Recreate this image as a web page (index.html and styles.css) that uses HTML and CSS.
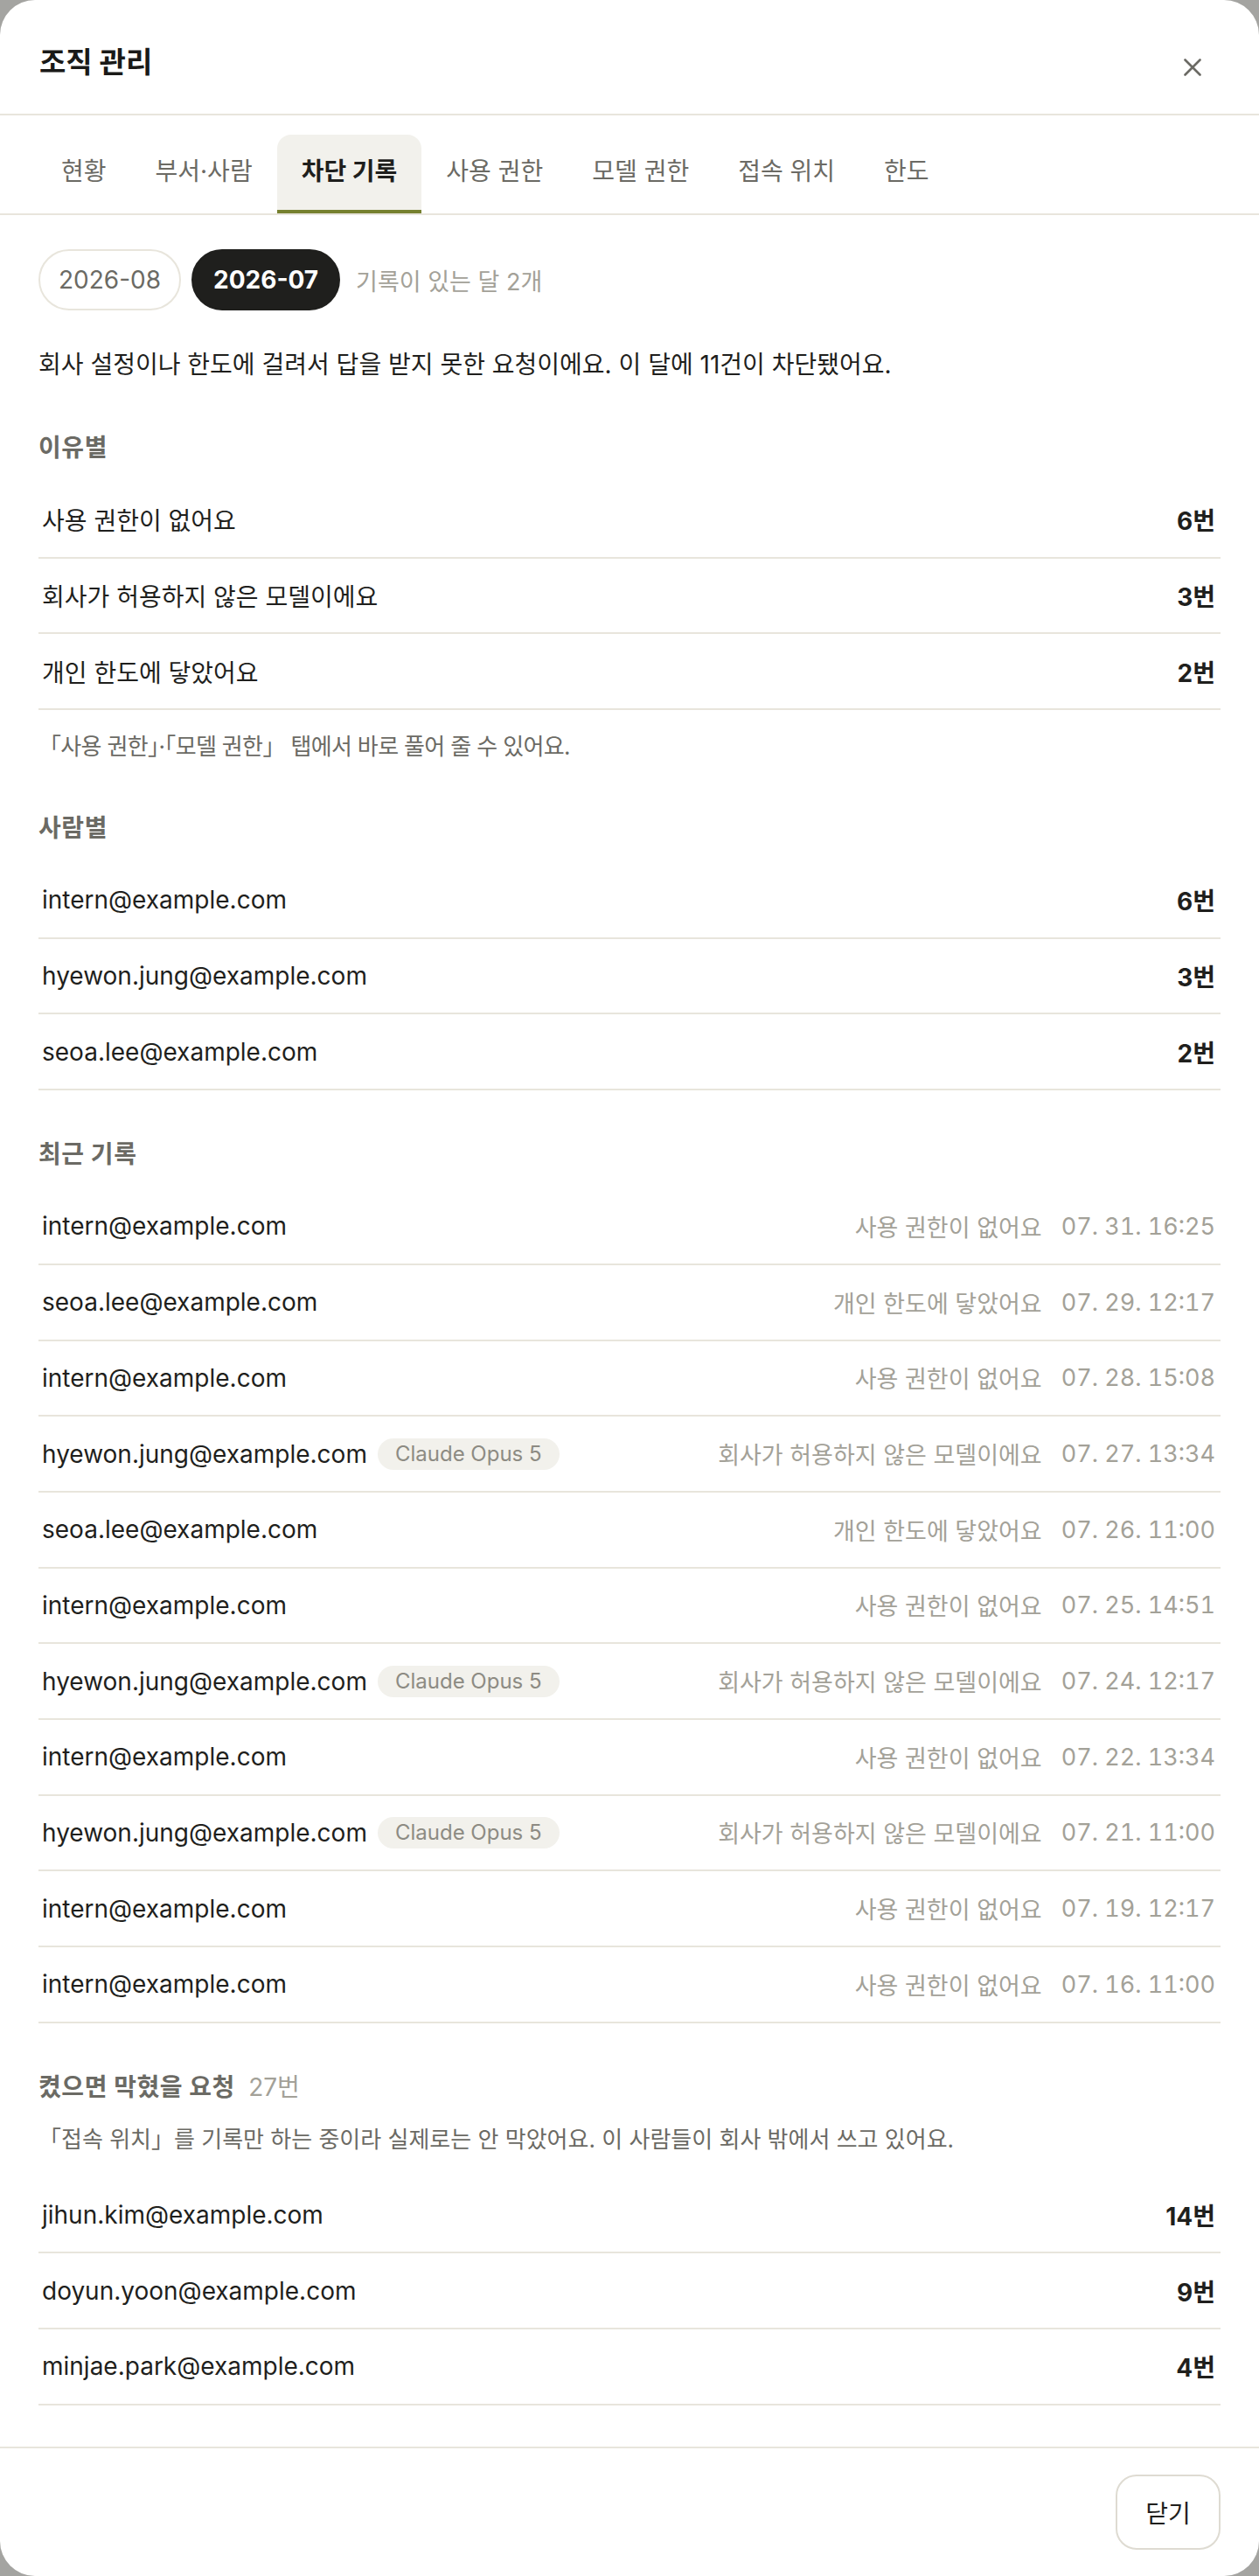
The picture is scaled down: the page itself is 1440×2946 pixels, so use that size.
FILE: index.html
```html
<!DOCTYPE html>
<html lang="ko">
<head>
<meta charset="utf-8">
<title>조직 관리</title>
<link rel="stylesheet" href="styles.css">
</head>
<body>
<div class="modal">
  <header class="modal-header">
    <h1 class="title">조직 관리</h1>
    <button class="close" aria-label="닫기">
      <svg width="20" height="20" viewBox="0 0 20 20" fill="none" stroke="currentColor" stroke-width="2.6" stroke-linecap="round"><path d="M1.5 1.5 L18.5 18.5 M18.5 1.5 L1.5 18.5"/></svg>
    </button>
  </header>
  <nav class="tabs">
    <button class="tab">현황</button>
    <button class="tab">부서·사람</button>
    <button class="tab active">차단 기록</button>
    <button class="tab">사용 권한</button>
    <button class="tab">모델 권한</button>
    <button class="tab">접속 위치</button>
    <button class="tab">한도</button>
  </nav>
  <main class="content">
    <div class="months">
      <button class="month">2026-08</button>
      <button class="month active">2026-07</button>
      <span class="months-note">기록이 있는 달 2개</span>
    </div>
    <p class="lead">회사 설정이나 한도에 걸려서 답을 받지 못한 요청이에요. 이 달에 11건이 차단됐어요.</p>

    <section class="section">
      <h2 class="section-title">이유별</h2>
      <ul class="list">
        <li class="row"><span class="label">사용 권한이 없어요</span><span class="count">6번</span></li>
        <li class="row"><span class="label">회사가 허용하지 않은 모델이에요</span><span class="count">3번</span></li>
        <li class="row"><span class="label">개인 한도에 닿았어요</span><span class="count">2번</span></li>
      </ul>
      <p class="hint">「사용 권한」·「모델 권한」 탭에서 바로 풀어 줄 수 있어요.</p>
    </section>

    <section class="section">
      <h2 class="section-title">사람별</h2>
      <ul class="list">
        <li class="row"><span class="label">intern@example.com</span><span class="count">6번</span></li>
        <li class="row"><span class="label">hyewon.jung@example.com</span><span class="count">3번</span></li>
        <li class="row"><span class="label">seoa.lee@example.com</span><span class="count">2번</span></li>
      </ul>
    </section>

    <section class="section">
      <h2 class="section-title">최근 기록</h2>
      <ul class="list">
        <li class="row"><span class="main"><span class="label">intern@example.com</span></span><span class="meta"><span class="reason">사용 권한이 없어요</span><span class="time">07. 31. 16:25</span></span></li>
        <li class="row"><span class="main"><span class="label">seoa.lee@example.com</span></span><span class="meta"><span class="reason">개인 한도에 닿았어요</span><span class="time">07. 29. 12:17</span></span></li>
        <li class="row"><span class="main"><span class="label">intern@example.com</span></span><span class="meta"><span class="reason">사용 권한이 없어요</span><span class="time">07. 28. 15:08</span></span></li>
        <li class="row"><span class="main"><span class="label">hyewon.jung@example.com</span><span class="chip">Claude Opus 5</span></span><span class="meta"><span class="reason">회사가 허용하지 않은 모델이에요</span><span class="time">07. 27. 13:34</span></span></li>
        <li class="row"><span class="main"><span class="label">seoa.lee@example.com</span></span><span class="meta"><span class="reason">개인 한도에 닿았어요</span><span class="time">07. 26. 11:00</span></span></li>
        <li class="row"><span class="main"><span class="label">intern@example.com</span></span><span class="meta"><span class="reason">사용 권한이 없어요</span><span class="time">07. 25. 14:51</span></span></li>
        <li class="row"><span class="main"><span class="label">hyewon.jung@example.com</span><span class="chip">Claude Opus 5</span></span><span class="meta"><span class="reason">회사가 허용하지 않은 모델이에요</span><span class="time">07. 24. 12:17</span></span></li>
        <li class="row"><span class="main"><span class="label">intern@example.com</span></span><span class="meta"><span class="reason">사용 권한이 없어요</span><span class="time">07. 22. 13:34</span></span></li>
        <li class="row"><span class="main"><span class="label">hyewon.jung@example.com</span><span class="chip">Claude Opus 5</span></span><span class="meta"><span class="reason">회사가 허용하지 않은 모델이에요</span><span class="time">07. 21. 11:00</span></span></li>
        <li class="row"><span class="main"><span class="label">intern@example.com</span></span><span class="meta"><span class="reason">사용 권한이 없어요</span><span class="time">07. 19. 12:17</span></span></li>
        <li class="row"><span class="main"><span class="label">intern@example.com</span></span><span class="meta"><span class="reason">사용 권한이 없어요</span><span class="time">07. 16. 11:00</span></span></li>
      </ul>
    </section>

    <section class="section">
      <h2 class="section-title">켰으면 막혔을 요청 <span class="title-count">27번</span></h2>
      <p class="note">「접속 위치」를 기록만 하는 중이라 실제로는 안 막았어요. 이 사람들이 회사 밖에서 쓰고 있어요.</p>
      <ul class="list">
        <li class="row"><span class="label">jihun.kim@example.com</span><span class="count">14번</span></li>
        <li class="row"><span class="label">doyun.yoon@example.com</span><span class="count">9번</span></li>
        <li class="row"><span class="label">minjae.park@example.com</span><span class="count">4번</span></li>
      </ul>
    </section>
  </main>
  <footer class="modal-footer">
    <button class="btn">닫기</button>
  </footer>
</div>
</body>
</html>
```

FILE: styles.css
```css
* { box-sizing: border-box; }

body {
  margin: 0;
  background: #a4a4a1;
  font-family: "Inter", "Noto Sans CJK KR", sans-serif;
  color: #1f1f1d;
}

button { font-family: inherit; cursor: pointer; }

.modal {
  width: 1440px;
  height: 2946px;
  background: #ffffff;
  border-radius: 40px;
  display: flex;
  flex-direction: column;
  overflow: hidden;
}

.modal-header {
  height: 132px;
  display: flex;
  align-items: flex-start;
  justify-content: space-between;
  padding: 47px 52px 0 45px;
  border-bottom: 2px solid #e8e5dc;
  flex-shrink: 0;
}

.title {
  margin: 0;
  font-size: 33px;
  line-height: 48px;
  font-weight: 700;
  color: #1a1a18;
}

.close {
  width: 48px;
  height: 48px;
  margin-top: 6px;
  padding: 0;
  border: 0;
  background: none;
  color: #6b6a64;
  display: flex;
  align-items: center;
  justify-content: center;
}

.tabs {
  display: flex;
  padding: 22px 42px 0;
  border-bottom: 2px solid #e8e5dc;
  flex-shrink: 0;
}

.tab {
  font-size: 28px;
  line-height: 40px;
  padding: 22px 28px 24px;
  border: 0;
  border-bottom: 4px solid transparent;
  border-radius: 16px 16px 0 0;
  background: none;
  color: #6b6a64;
}

.tab.active {
  background: #f2f1ec;
  color: #1f1f1d;
  font-weight: 700;
  border-bottom-color: #76802f;
}

.content {
  flex: 1;
  min-height: 0;
  padding: 39px 44px 0;
  overflow: hidden;
}

.months {
  display: flex;
  align-items: center;
  gap: 12px;
  margin-bottom: 40px;
}

.month {
  height: 70px;
  padding: 0 21px;
  border: 2px solid #e8e5dc;
  border-radius: 35px;
  background: #ffffff;
  color: #6b6a64;
  font-size: 28px;
  line-height: 66px;
}

.month.active {
  padding: 0 23px;
  background: #1f1f1d;
  border-color: #1f1f1d;
  color: #ffffff;
  font-weight: 700;
}

.months-note {
  margin-left: 6px;
  font-size: 27px;
  color: #a3a198;
}

.lead {
  margin: 0 0 2px;
  font-size: 28px;
  line-height: 44px;
}

.section { margin-top: 54px; }

.section-title {
  margin: 0 0 21px;
  font-size: 28px;
  line-height: 38px;
  font-weight: 700;
  color: #6b6a64;
  letter-spacing: 0.02em;
}

.title-count {
  margin-left: 8px;
  font-weight: 400;
  color: #a3a198;
  letter-spacing: 0;
}

.list {
  list-style: none;
  margin: 0;
  padding: 0;
}

.row {
  height: 86.7px;
  display: flex;
  align-items: center;
  justify-content: space-between;
  padding: 0 6px 0 4px;
  border-bottom: 2px solid #e8e5dc;
  font-size: 28px;
}

.count { font-weight: 700; }

.main {
  display: flex;
  align-items: center;
}

.chip {
  margin-left: 12px;
  height: 36px;
  padding: 0 20px;
  border-radius: 18px;
  background: #f2f1ec;
  color: #8d8b83;
  font-size: 24px;
  line-height: 36px;
}

.meta {
  display: flex;
  align-items: center;
  gap: 22px;
  color: #a3a198;
}

.reason {
  font-size: 27px;
}

.time {
  font-size: 27px;
  font-variant-numeric: tabular-nums;
}

.hint {
  margin: 22px 0 0;
  font-size: 26px;
  line-height: 40px;
  color: #6b6a64;
  letter-spacing: -0.025em;
}

.note {
  margin: 2px 0 24px;
  font-size: 26px;
  line-height: 40px;
  color: #6b6a64;
}

.modal-footer {
  display: flex;
  justify-content: flex-end;
  padding: 30px 44px;
  border-top: 2px solid #e8e5dc;
  flex-shrink: 0;
}

.btn {
  width: 120px;
  height: 86px;
  border: 2px solid #dedbd2;
  border-radius: 24px;
  background: #ffffff;
  color: #1f1f1d;
  font-size: 28px;
}
```
